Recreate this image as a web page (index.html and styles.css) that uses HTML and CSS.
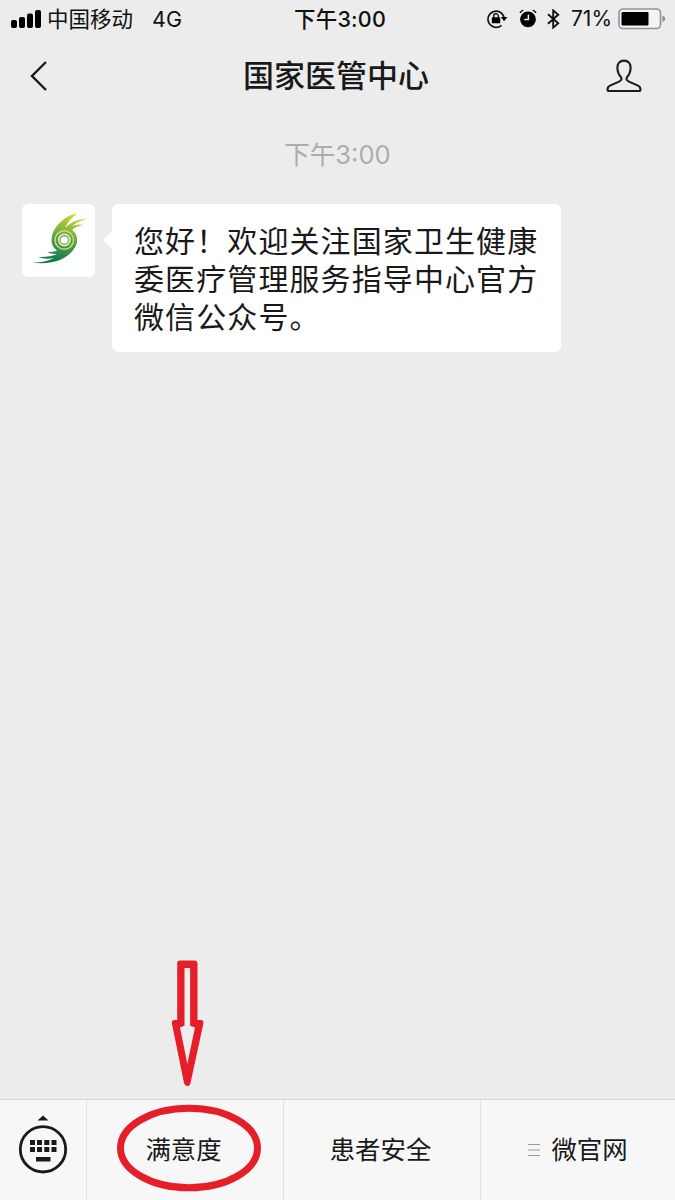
FILE: index.html
```html
<!DOCTYPE html>
<html lang="zh-CN">
<head>
<meta charset="utf-8">
<title>国家医管中心</title>
<link rel="stylesheet" href="styles.css">
</head>
<body>
<div class="screen">
  <header class="status">
    <div class="status-left">
      <svg class="signal" width="31" height="19" viewBox="0 0 31 19"><rect x="0" y="11" width="6" height="8" rx="2"/><rect x="8" y="8" width="6" height="11" rx="2"/><rect x="16" y="4.500" width="6" height="14.500" rx="2"/><rect x="24" y="1" width="6" height="18" rx="2"/></svg>
      <span class="carrier">中国移动</span>
      <span class="network">4G</span>
    </div>
    <div class="clock">下午3:00</div>
    <div class="status-right">
      <svg class="lock" width="21" height="20" viewBox="0 0 21 20"><path d="M14.500 16.300A8.100 8.100 0 1 1 17.100 9" fill="none" stroke="#111" stroke-width="1.600"/><path d="M13.800 8h6.600l-3.300 4.300z"/><rect x="4.800" y="8.300" width="8.400" height="6" rx=".6"/><path d="M6.700 9V7a2.300 2.300 0 0 1 4.600 0v2" fill="none" stroke="#111" stroke-width="1.400"/></svg>
      <svg class="alarm" width="18" height="19" viewBox="0 0 18 19"><circle cx="9" cy="10.300" r="7.900"/><path d="M1 4Q2 1.800 4.300 1.200M17 4Q16 1.800 13.700 1.200" fill="none" stroke="#111" stroke-width="1.500"/><path d="M9.400 5.500v5H5.200" fill="none" stroke="#ececec" stroke-width="1.500"/></svg>
      <svg class="bluetooth" width="13" height="20" viewBox="0 0 13 20"><path d="M1 5.300l10.200 9-5 4.300V1.400l5 4.300L1 14.700" fill="none" stroke="#111" stroke-width="1.900"/></svg>
      <span class="percent">71%</span>
      <svg class="battery" width="48" height="22" viewBox="0 0 48 22"><rect x="1" y="1" width="41.500" height="19.500" rx="4" fill="#f4f4f4" stroke="#929292" stroke-width="1.600"/><rect x="3.500" y="4" width="27" height="13.500" rx="1"/><path d="M44.300 7.500q3 1 3 3.300t-3 3.300z" fill="#929292"/></svg>
    </div>
  </header>
  <nav class="titlebar">
    <svg class="back" width="18" height="32" viewBox="0 0 18 32"><path d="M17 2L3 16l14 14" fill="none" stroke="#181818" stroke-width="2.400"/></svg>
    <h1 class="title">国家医管中心</h1>
    <svg class="profile" width="36" height="34" viewBox="0 0 36 34"><path d="M18 1.600C13.500 1.600 11.400 4.700 11.400 9C11.400 13 12.800 15.700 15.200 18.500C16.200 20.500 14.900 21.700 12.500 22.900L4.500 26.400C2 27.500 1.500 29 1.500 30.500Q1.500 32 3 32H33Q34.500 32 34.500 30.500C34.500 29 34 27.500 31.500 26.400L23.500 22.900C21.100 21.700 19.800 20.500 20.800 18.500C23.200 15.700 24.600 13 24.600 9C24.600 4.700 22.500 1.600 18 1.600Z" fill="none" stroke="#1c1c1c" stroke-width="2.100"/></svg>
  </nav>
  <main class="chat">
    <div class="timestamp">下午3:00</div>
    <div class="message">
      <div class="avatar">
        <svg width="73" height="73" viewBox="0 0 73 73">
          <defs><linearGradient id="leaf" gradientUnits="userSpaceOnUse" x1="50" y1="9" x2="36" y2="60"><stop offset="0" stop-color="#d5dc35"/><stop offset=".5" stop-color="#61a540"/><stop offset="1" stop-color="#0a7453"/></linearGradient></defs>
          <g fill="url(#leaf)">
            <circle cx="42.300" cy="36" r="12.800"/>
            <path d="M30 33C31 24 42 11 55.500 9.500Q47 15 43 24Q51 15 65 15Q55 17.500 50 22Q55 19.500 62 21Q53 22 49 27L36 31Z"/>
            <path d="M54.500 38C52 52 34 62 10 58.500Q22 59 32 54Q24 56 16 53Q28 53.500 35 50Q30 50.500 25 48Q33 48.500 38 45Z"/>
          </g>
          <circle cx="42.300" cy="36" r="9.300" fill="none" stroke="#c5dc80" stroke-width="1.500"/>
          <circle cx="42.300" cy="36" r="5.700" fill="#7fb35a" stroke="#e6efc9" stroke-width="1.500"/>
          <circle cx="42.300" cy="36" r="3.600" fill="#fff"/>
        </svg>
      </div>
      <div class="bubble">您好！欢迎关注国家卫生健康委医疗管理服务指导中心官方微信公众号。</div>
    </div>
    <svg class="arrow" width="34" height="128" viewBox="0 0 34 128"><path d="M10 1.500H24.500Q27.500 1.500 27.500 4.500V61H31Q34 61 33.300 65L20.500 124Q20 127 17.500 127T14 124L2 65Q1.200 61 4.500 61H7.200V4.500Q7.200 1.500 10 1.500Z" fill="#e61e27"/><path d="M14.500 9h5.600v57.500q1 1.300 4.900 1.800L17.300 105 10 68.300q3.500-.5 4.500-1.800z" fill="#eee"/></svg>
  </main>
  <footer class="menu">
    <div class="keyboard">
      <svg width="50" height="60" viewBox="0 0 50 60"><path d="M19.500 6.500l5.500-5 5.500 5z" fill="#1a1a1a"/><circle cx="25" cy="35.300" r="22.700" fill="none" stroke="#1a1a1a" stroke-width="2.800"/><path d="M12 26h5v5h-5zM19 26h5v5h-5zM26.300 26h5v5h-5zM33.500 26h5v5h-5zM12 33h5v5h-5zM19 33h5v5h-5zM26.300 33h5v5h-5zM33.500 33h5v5h-5zM18 43h14.500v4.500H18z" fill="#1a1a1a"/></svg>
    </div>
    <div class="item marked">满意度<svg class="ring" width="146" height="88" viewBox="0 0 146 88"><ellipse cx="73" cy="44" rx="68.500" ry="39.800" fill="none" stroke="#e61e27" stroke-width="7"/></svg></div>
    <div class="item">患者安全</div>
    <div class="item"><svg class="lines" width="12" height="14" viewBox="0 0 12 14"><path d="M0 1.500h12M0 7h12M0 12.500h12" stroke="#999" stroke-width="1.200"/></svg>微官网</div>
  </footer>
</div>
</body>
</html>
```
FILE: styles.css
```css
* { box-sizing: border-box; }
body {
  margin: 0;
  background: #ececec;
  color: #191919;
  font-family: Inter, "Noto Sans CJK SC", sans-serif;
}
svg { display: block; flex: none; }
.screen {
  display: flex;
  flex-direction: column;
  width: 675px;
  height: 1200px;
  overflow: hidden;
}
.status {
  display: grid;
  grid-template-columns: 240px 1fr 240px;
  align-items: center;
  height: 37px;
  padding: 0 10px 0 11px;
  color: #111;
  font-size: 21.5px;
  line-height: 36px;
  white-space: nowrap;
}
.status-left, .status-right { display: flex; align-items: center; }
.status-right { justify-content: flex-end; margin-right: -1px; }
.carrier { margin-left: 5px; }
.network { margin-left: 19px; }
.clock { text-align: center; font-weight: 500; letter-spacing: .2px; padding-left: 4px; }
.alarm { margin-left: 11px; }
.bluetooth { margin-left: 10px; }
.percent { margin-left: 11px; font-size: 21px; }
.battery { margin-left: 6px; }
.titlebar {
  display: flex;
  align-items: center;
  justify-content: space-between;
  height: 78px;
  padding: 0 33px 0 29px;
}
.title {
  margin: 0;
  padding-left: 19px;
  font-size: 31px;
  font-weight: 500;
  line-height: 44px;
}
.chat { flex: 1; display: flex; flex-direction: column; min-height: 0; }
.timestamp {
  margin-top: 21px;
  text-align: center;
  color: #adadad;
  font-size: 25.5px;
  line-height: 38px;
}
.message { display: flex; align-items: flex-start; gap: 17px; margin: 30px 0 0 22px; }
.avatar { width: 73px; height: 73px; background: #fff; border-radius: 6px; }
.bubble {
  position: relative;
  width: 449px;
  height: 148px;
  padding: 18px 18px 16px 22px;
  background: #fff;
  border-radius: 6px;
  font-size: 30px;
  letter-spacing: 1.1px;
  line-height: 38px;
}
.bubble::before {
  content: "";
  position: absolute;
  left: -9px;
  top: 27px;
  border: 9px solid transparent;
  border-left: 0;
  border-right-color: #fff;
}
.arrow { margin: auto 0 12px 170px; }
.menu {
  display: grid;
  grid-template-columns: 87px 196px 197px 1fr;
  height: 101px;
  border-top: 1px solid #d4d4d4;
  background: #f7f7f7;
}
.keyboard, .item { display: flex; align-items: center; justify-content: center; }
.keyboard { align-items: flex-start; padding-top: 14px; border-right: 1px solid #e1e1e1; }
.item { position: relative; padding-right: 3px; font-size: 25.4px; line-height: 40px; }
.item:last-child { padding-right: 0; }
.item + .item { border-left: 1px solid #e1e1e1; }
.ring { position: absolute; left: 29px; top: 4px; }
.lines { margin-right: 11px; }
```
